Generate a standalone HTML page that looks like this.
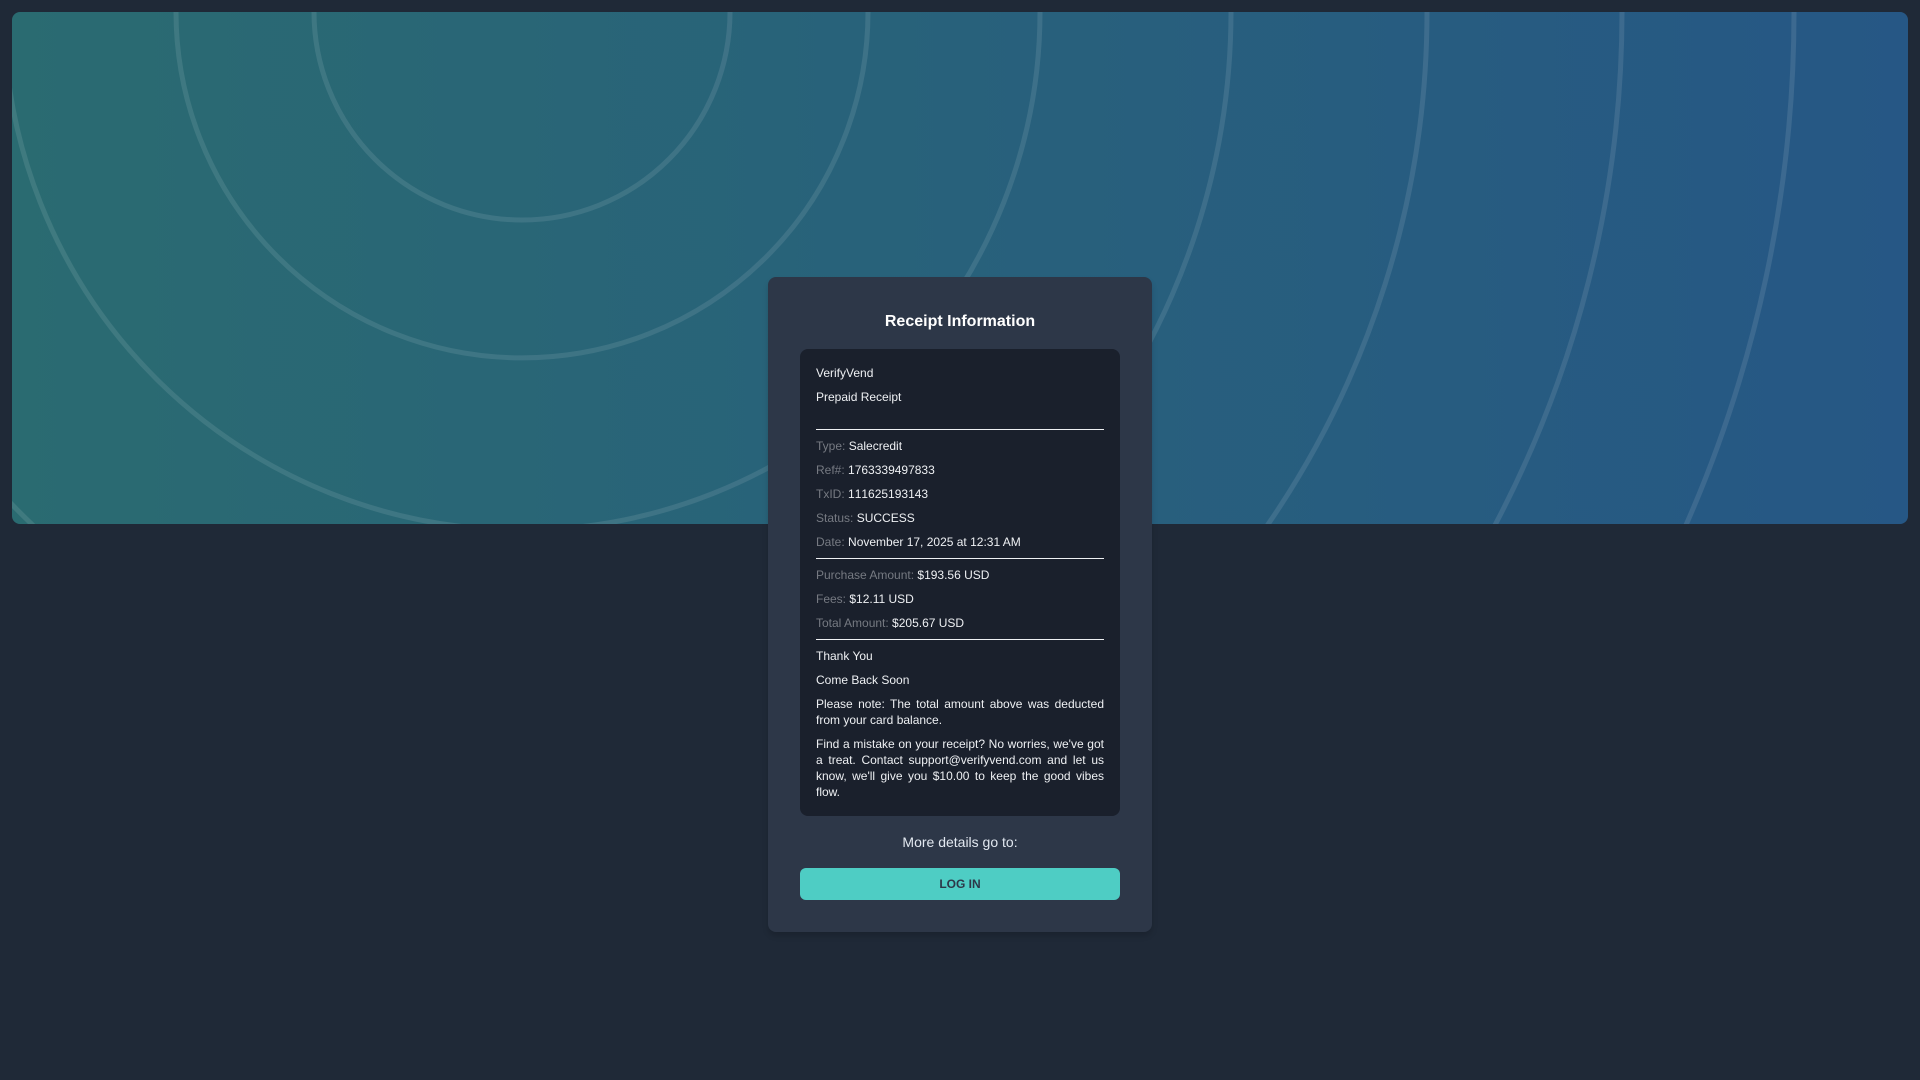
<!DOCTYPE html>
<html lang="en">
<head>
<meta charset="utf-8">
<title>Receipt Information</title>
<style>
*{box-sizing:border-box}
html,body{margin:0;padding:0;width:1920px;height:1080px;overflow:hidden;background:#1f2937;font-family:"Liberation Sans",Arial,sans-serif}
.hero{position:absolute;left:12px;top:12px;width:1896px;height:512px;border-radius:8px;overflow:hidden;background:linear-gradient(90deg,#2a6b71 0%,#265785 100%)}
.hero svg{position:absolute;left:0;top:0;display:block}
.card{position:absolute;left:768px;top:277px;width:384px;height:655px;padding:32px;background:#2d3748;border-radius:8px;box-shadow:0 4px 6px rgba(0,0,0,.15)}
h1{margin:0 0 14px;font-size:16px;line-height:26px;font-weight:700;color:#fff;text-align:center}
.box{width:320px;height:467px;padding:16px;background:#1a202c;border-radius:8px;color:#eef0f3;font-size:12px;line-height:16px}
.box p{margin:0 0 8px}
.box p.j{text-align:justify}
.box span{color:#767a82}
.box span.nk{color:inherit;font-kerning:none}
.box hr{border:0;border-top:1px solid #eef0f3;margin:0 0 8px}
.more{margin:17px 0 0;font-size:14px;line-height:18px;color:#e2e8f0;text-align:center}
.btn{display:block;margin-top:17px;width:320px;height:32px;line-height:32px;background:#4ecdc4;border-radius:6px;color:#2d3748;font-size:12px;font-weight:700;text-align:center}
</style>
</head>
<body>
<div class="hero">
<svg width="1896" height="512" viewBox="0 0 1896 512" fill="none" stroke="#fff" stroke-opacity=".1" stroke-width="5">
<path d="M718 0A208 208 0 0 1 302 0"/>
<path d="M856 0A346 346 0 0 1 164 0"/>
<path d="M1028 0A518 518 0 0 1 -8 0"/>
<path d="M1219 0A709 709 0 0 1 992 520"/>
<path d="M28.1 520A709 709 0 0 1 -5 487.3"/>
<path d="M1415 0A905 905 0 0 1 1250.7 520"/>
<path d="M1610 0A1100 1100 0 0 1 1479.3 520"/>
<path d="M1782 0A1272 1272 0 0 1 1670.9 520"/>
</svg>
</div>
<div class="card">
<h1>Receipt Information</h1>
<div class="box">
<p>VerifyVend</p>
<p style="margin-bottom:24px">Prepaid Receipt</p>
<hr>
<p><span>Type:</span> Salecredit</p>
<p><span>Ref#:</span> 1763339497833</p>
<p><span>TxID:</span> <span class="nk">111625193143</span></p>
<p><span>Status:</span> SUCCESS</p>
<p><span>Date:</span> November 17, 2025 at 12:31 AM</p>
<hr>
<p><span>Purchase Amount:</span> $193.56 USD</p>
<p><span>Fees:</span> $12.11 USD</p>
<p><span>Total Amount:</span> $205.67 USD</p>
<hr>
<p>Thank You</p>
<p>Come Back Soon</p>
<p class="j">Please note: The total amount above was deducted from your card balance.</p>
<p class="j" style="margin:0">Find a mistake on your receipt? No worries, we've got a treat. Contact support@verifyvend.com and let us know, we'll give you $10.00 to keep the good vibes flow.</p>
</div>
<p class="more">More details go to:</p>
<a class="btn">LOG IN</a>
</div>
</body>
</html>
